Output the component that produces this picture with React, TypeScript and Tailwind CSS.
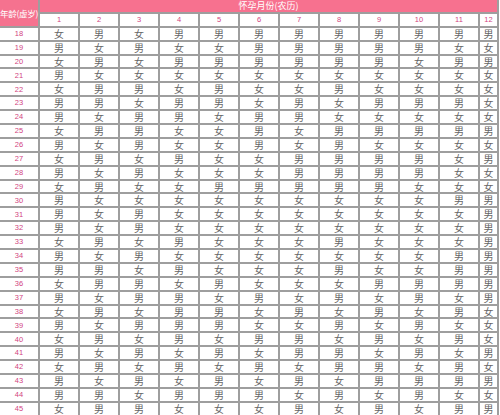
import React from "react";

const rows: [number, string][] = [
  [18, "女男女男男男男男男男男男"],
  [19, "男女男女女男男男男男女女"],
  [20, "女男女男男男男男男女男男"],
  [21, "男女女女女女女女女女女女"],
  [22, "女男男女男女女男女女女女"],
  [23, "男男女男男女男女男男男女"],
  [24, "男女男男女男男女女女女女"],
  [25, "女男男女女男女男男男男男"],
  [26, "男女男女女男女男女女女女"],
  [27, "女男女男女女男男男男女男"],
  [28, "男女男女女女男男男男女女"],
  [29, "女男女女男男男男男女女女"],
  [30, "男女女女女女女女女女男男"],
  [31, "男女男女女女女女女女女男"],
  [32, "男女男女女女女女女女女男"],
  [33, "女男女男女女女男女女女男"],
  [34, "男女男女女女女女女女男男"],
  [35, "男男女男女女女男女女男男"],
  [36, "女男男女男女女女男男男男"],
  [37, "男女男男女男女男女男女男"],
  [38, "女男女男男女男女男女男女"],
  [39, "男女男男男女女男女男女女"],
  [40, "女男女男女男男女男女男女"],
  [41, "男女男女男女男男女男女男"],
  [42, "女男女男女男女男男女男女"],
  [43, "男女男女男女男女男男男男"],
  [44, "男男女男男男女男女男女女"],
  [45, "女男男女女女男女男女男男"],
];

const months = [1, 2, 3, 4, 5, 6, 7, 8, 9, 10, 11, 12];

export default function App() {
  return (
    <div className="w-[500px] h-[415px] overflow-hidden bg-white font-['Noto_Sans_CJK_SC','Liberation_Sans',sans-serif]">
      <div className="grid w-[499px] grid-cols-[38px_repeat(11,38px)_17px] auto-rows-[11.9px] gap-[2px] bg-[#9e9e9e] border-r-2 border-[#9e9e9e]">
        <div className="row-span-2 bg-[#f5728f] text-white text-[8.5px] leading-none flex items-center justify-center whitespace-nowrap tracking-[-0.3px]">
          年龄(虚岁)
        </div>
        <div className="col-span-12 bg-[#f7718f] text-white text-[9px] leading-none flex items-center justify-center">
          怀孕月份(农历)
        </div>
        {months.map((m) => (
          <div key={m} className="bg-white text-[#d2447f] text-[7.5px] leading-none flex items-center justify-center font-['Liberation_Sans',sans-serif]">
            {m}
          </div>
        ))}
        {rows.map(([age, s]) => (
          <React.Fragment key={age}>
            <div className="bg-white text-[#d2447f] text-[7.5px] leading-none flex items-center justify-center font-['Liberation_Sans',sans-serif]">
              {age}
            </div>
            {Array.from(s).map((c, i) => (
              <div key={i} className="bg-white text-[#666] text-[10px] leading-none flex items-center justify-center">
                {c}
              </div>
            ))}
          </React.Fragment>
        ))}
      </div>
    </div>
  );
}
